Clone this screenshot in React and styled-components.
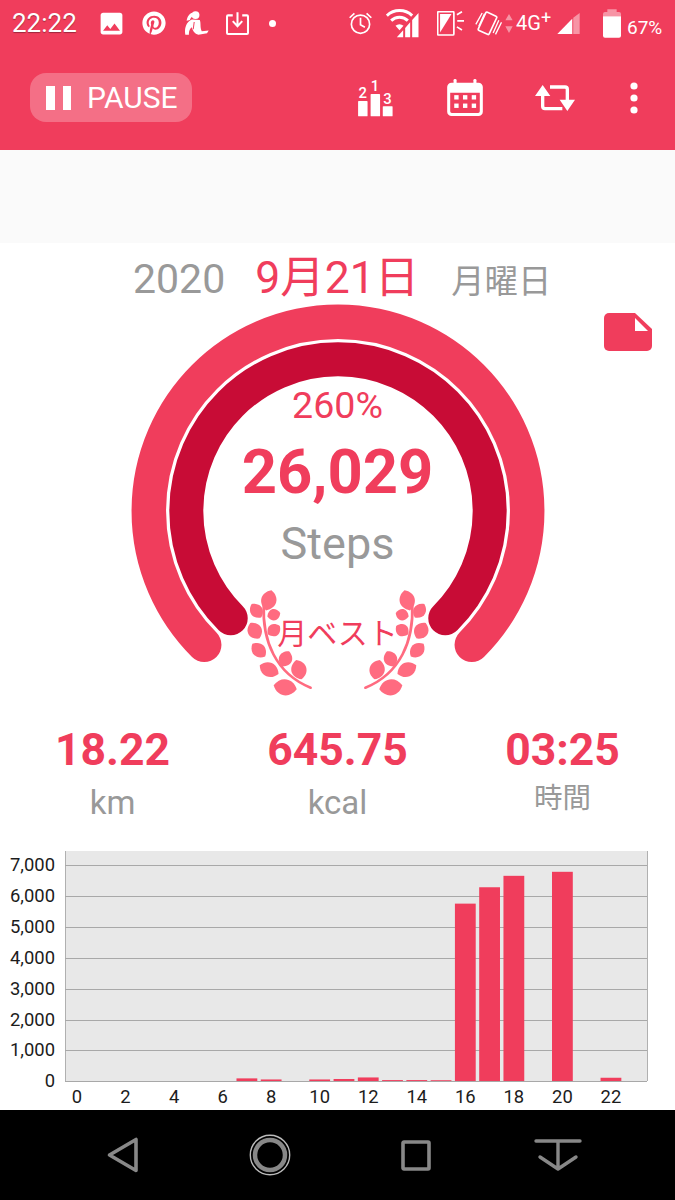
import styled, { createGlobalStyle } from "styled-components";
import { FaPinterest } from "react-icons/fa";
import { MdImage } from "react-icons/md";

const RED = "#f03d5c";
const DARK_RED = "#c80c36";
const GREY = "#999999";

const hourlySteps = {
  7: 85, 8: 50, 10: 50, 11: 65, 12: 115, 13: 30, 14: 30, 15: 25,
  16: 5740, 17: 6270, 18: 6640, 20: 6770, 22: 105,
};
const gridValues = [7000, 6000, 5000, 4000, 3000, 2000, 1000, 0];
const gridY = [865, 896, 927, 958, 989, 1020, 1050, 1081];
const evenHours = [0, 2, 4, 6, 8, 10, 12, 14, 16, 18, 20, 22];

// chart svg starts at page y 845
const CHART_TOP = 845;
const hourX = (hour) => 77 + hour * 24.27;
const stepsY = (steps) => 1081 - (steps / 1000) * 30.9;

function gaugeArc(r) {
  const cx = 210;
  const cy = 207;
  const d = r * Math.SQRT1_2;
  return `M ${cx - d} ${cy + d} A ${r} ${r} 0 1 1 ${cx + d} ${cy + d}`;
}

// cx, cy, half width, half length, tilt
const leaves = [
  [145, 91, 16, 31, 15],
  [108, 122, 13, 25, -35],
  [160, 134, 12, 20, 75],
  [103, 182, 15, 27, -30],
  [160, 180, 13, 22, 55],
  [115, 240, 14, 27, -45],
  [195, 266, 14, 25, 25],
  [146, 298, 15, 31, -65],
  [235, 298, 16, 30, -15],
  [194, 351, 17, 35, -80],
];

const leafPath = (w, l) =>
  `M0 ${-l} C${w * 1.9} ${-l * 0.55} ${w * 1.9} ${l * 0.55} 0 ${l} C${-w * 1.9} ${l * 0.55} ${-w * 1.9} ${-l * 0.55} 0 ${-l} Z`;

function Laurel({ flip }) {
  return (
    <LaurelSvg $flip={flip} viewBox="80 60 200 320">
      <path
        d="M130 105 C125 210 165 310 270 352"
        fill="none"
        stroke="#ff6b80"
        strokeWidth="8"
        strokeLinecap="round"
      />
      {leaves.map(([x, y, w, l, angle]) => (
        <path
          key={`${x}-${y}`}
          d={leafPath(w, l)}
          fill="#ff6b80"
          transform={`translate(${x} ${y}) rotate(${angle})`}
        />
      ))}
    </LaurelSvg>
  );
}

function StatusBar() {
  return (
    <StatusRow>
      <Clock>22:22</Clock>
      <StatusSlot $ml={23} $w={22}>
        <MdImage size={29} />
      </StatusSlot>
      <StatusSlot $ml={20} $w={24}>
        <FaPinterest size={24} />
      </StatusSlot>
      <StatusSlot $ml={19} $w={24}>
        <svg width="24" height="26" viewBox="555 28 73 78" fill="#fff">
          <circle cx="587" cy="43" r="12" />
          <path d="M577 36 C566 40 562 50 560 60 L570 58 C572 52 576 48 580 46 Z" />
          <path d="M576 56 C560 62 552 82 556 103 L567 103 C566 92 570 84 576 80 C578 90 584 100 596 103 L622 98 L627 90 L606 92 C600 80 604 68 600 58 Z" />
          <path d="M583 64 L580 86" fill="none" stroke={RED} strokeWidth="3" />
        </svg>
      </StatusSlot>
      <StatusSlot $ml={17} $w={23}>
        <svg width="23" height="23" viewBox="677 35 68 68" fill="none" stroke="#fff" strokeWidth="6">
          <path d="M697 45 H683 a3 3 0 0 0 -3 3 V97 a3 3 0 0 0 3 3 H739 a3 3 0 0 0 3 -3 V48 a3 3 0 0 0 -3 -3 H725" />
          <path d="M711 36 V76 M697 62 L711 77 L725 62" />
        </svg>
      </StatusSlot>
      <StatusSlot $ml={19} $w={8}>
        <Dot />
      </StatusSlot>

      <StatusSlot $ml={73} $w={23}>
        <svg width="23" height="23" viewBox="40 33 68 68" fill="none" stroke="#fff" strokeWidth="5">
          <circle cx="74" cy="69" r="27" />
          <path d="M74 50 V71 L87 78 M42 50 L56 37 M92 37 L106 50" />
        </svg>
      </StatusSlot>
      <StatusSlot $ml={14} $w={33}>
        <svg width="33" height="30" viewBox="150 25 98 90" fill="#fff">
          <path d="M152 48 A55 55 0 0 1 228 48" fill="none" stroke="#fff" strokeWidth="9" />
          <path d="M165 63 A36 36 0 0 1 215 63" fill="none" stroke="#fff" strokeWidth="9" />
          <path d="M178 78 A18 18 0 0 1 202 78 L190 92 Z" />
          <path d="M182 113 L201 92 V113 Z M207 113 V85 L222 68 V113 Z M228 113 V61 L247 40 V113 Z" />
        </svg>
      </StatusSlot>
      <StatusSlot $ml={18} $w={27}>
        <svg width="27" height="25" viewBox="302 33 80 74" fill="#fff">
          <rect x="304" y="35" width="48" height="69" rx="3" fill="none" stroke="#fff" strokeWidth="5" />
          <path d="M311 42 H345 L311 97 Z" />
          <path d="M361 44 L376 35 M362 62 H382 M361 80 L376 89" fill="none" stroke="#fff" strokeWidth="5" />
        </svg>
      </StatusSlot>
      <StatusSlot $ml={11} $w={27}>
        <svg width="27" height="25" viewBox="415 30 80 75" fill="none" stroke="#fff" strokeWidth="4">
          <rect x="434" y="37" width="36" height="60" rx="4" strokeWidth="5" transform="rotate(25 452 67)" />
          <path d="M436 36 L417 70 M443 38 L426 76 M469 96 L486 58 M476 100 L494 64" />
        </svg>
      </StatusSlot>
      <StatusSlot $ml={3} $w={8}>
        <svg width="8" height="19" viewBox="505 33 22 57" fill="#fff" opacity="0.45">
          <path d="M516 33 L527 52 H505 Z M516 90 L505 70 H527 Z" />
        </svg>
      </StatusSlot>
      <NetworkType>
        4G<sup>+</sup>
      </NetworkType>
      <StatusSlot $ml={5} $w={23}>
        <svg width="23" height="21" viewBox="667 38 66 62" fill="#fff">
          <path d="M667 100 L711 55 V100 Z" />
          <path d="M714 100 V52 L733 38 V100 Z" opacity="0.45" />
        </svg>
      </StatusSlot>
      <StatusSlot $ml={23} $w={18}>
        <svg width="18" height="29" viewBox="802 25 54 85" fill="#fff">
          <path d="M815 25 H843 V33 H850 a6 6 0 0 1 6 6 V46 H802 V39 a6 6 0 0 1 6 -6 H815 Z" opacity="0.45" />
          <path d="M802 46 H856 V104 a6 6 0 0 1 -6 6 H808 a6 6 0 0 1 -6 -6 Z" />
        </svg>
      </StatusSlot>
      <BatteryLevel>67%</BatteryLevel>
    </StatusRow>
  );
}

function Toolbar() {
  return (
    <ToolbarRow>
      <PauseButton>
        <PauseBars>
          <span />
          <span />
        </PauseBars>
        PAUSE
      </PauseButton>
      <ToolbarIcons>
        <ToolIcon>
          <PodiumSvg width="36" height="46" viewBox="68 214 104 136" fill="#fff">
            <text x="84" y="295">2</text>
            <text x="120" y="274">1</text>
            <text x="157" y="311">3</text>
            <rect x="70" y="303" width="28" height="45" rx="2" />
            <rect x="107" y="282" width="28" height="66" rx="2" />
            <rect x="143" y="318" width="29" height="30" rx="2" />
          </PodiumSvg>
        </ToolIcon>
        <ToolIcon>
          <svg width="36" height="37" viewBox="337 237 106 110" fill="#fff">
            <path d="M350 248 H430 a13 13 0 0 1 13 13 V334 a13 13 0 0 1 -13 13 H350 a13 13 0 0 1 -13 -13 V261 a13 13 0 0 1 13 -13 Z M346 278 V333 a5 5 0 0 0 5 5 H429 a5 5 0 0 0 5 -5 V278 Z" fillRule="evenodd" />
            <rect x="356" y="237" width="9" height="18" rx="4" />
            <rect x="415" y="237" width="9" height="18" rx="4" />
            {[358, 384, 410].map((x) =>
              [285, 310].map((y) => <rect key={`${x}-${y}`} x={x} y={y} width="13" height="13" />)
            )}
          </svg>
        </ToolIcon>
        <ToolIcon>
          <svg width="40" height="26" viewBox="600 254 120 78">
            <path d="M623 275 V318 a7 7 0 0 0 7 7 H682" fill="none" stroke="#fff" strokeWidth="10" strokeLinejoin="round" />
            <path d="M645 260 H690 a7 7 0 0 1 7 7 V310" fill="none" stroke="#fff" strokeWidth="10" strokeLinejoin="round" />
            <path d="M623 254 L646 287 H600 Z M697 332 L720 298 H674 Z" fill="#fff" />
          </svg>
        </ToolIcon>
        <MoreIcon>
          <svg width="8" height="32" viewBox="0 0 8 32" fill="#fff">
            <circle cx="4" cy="4" r="3.6" />
            <circle cx="4" cy="16" r="3.6" />
            <circle cx="4" cy="28" r="3.6" />
          </svg>
        </MoreIcon>
      </ToolbarIcons>
    </ToolbarRow>
  );
}

function Gauge() {
  return (
    <GaugeWrap>
      <GaugeSvg width="420" height="400" viewBox="0 0 420 400" fill="none" strokeLinecap="round">
        <path d={gaugeArc(189.2)} stroke={RED} strokeWidth="34.5" />
        <path d={gaugeArc(151.7)} stroke={DARK_RED} strokeWidth="34" />
      </GaugeSvg>
      <LaurelRow>
        <Laurel />
        <Laurel flip />
      </LaurelRow>
      <GaugeText>
        <Percent>260%</Percent>
        <StepCount>26,029</StepCount>
        <StepLabel>Steps</StepLabel>
        <BestLabel>月ベスト</BestLabel>
      </GaugeText>
    </GaugeWrap>
  );
}

function HourlyChart() {
  return (
    <ChartSvg width="675" height="265" viewBox={`0 ${CHART_TOP} 675 265`}>
      <rect x="65" y="851" width="582" height="230" fill="#e8e8e8" />
      <path d="M65.5 851 V1081 M647.5 851 V1081" stroke="#b0b0b0" strokeWidth="1" />
      {gridValues.map((value, i) => (
        <g key={value}>
          <line x1="65" x2="647" y1={gridY[i] + 0.5} y2={gridY[i] + 0.5} stroke="#a8a8a8" strokeWidth="1" />
          <text x="55" y={gridY[i] + 6} textAnchor="end">
            {value.toLocaleString("en-US")}
          </text>
        </g>
      ))}
      {Object.entries(hourlySteps).map(([hour, steps]) => (
        <rect
          key={hour}
          x={hourX(Number(hour)) - 10.4}
          y={stepsY(steps)}
          width="20.8"
          height={1081 - stepsY(steps)}
          fill={RED}
        />
      ))}
      {evenHours.map((hour) => (
        <text key={hour} x={hourX(hour)} y="1103" textAnchor="middle">
          {hour}
        </text>
      ))}
    </ChartSvg>
  );
}

export default function App() {
  return (
    <Screen>
      <GlobalStyle />
      <Header>
        <StatusBar />
        <Toolbar />
      </Header>
      <AdBand />
      <Content>
        <DateRow>
          <Year>2020</Year>
          <DateText>9月21日</DateText>
          <Weekday>月曜日</Weekday>
        </DateRow>
        <NoteIcon viewBox="0 0 48 38">
          <path
            d="M5 0 H31 L48 16 V33 a5 5 0 0 1 -5 5 H5 a5 5 0 0 1 -5 -5 V5 a5 5 0 0 1 5 -5 Z"
            fill={RED}
          />
          <path d="M31 5 L44 18 H31 Z" fill="#fff" />
        </NoteIcon>
        <Gauge />
        <StatsRow>
          <Stat>
            <StatValue>18.22</StatValue>
            <StatLabel>km</StatLabel>
          </Stat>
          <Stat>
            <StatValue>645.75</StatValue>
            <StatLabel>kcal</StatLabel>
          </Stat>
          <Stat>
            <StatValue>03:25</StatValue>
            <StatLabel $cjk>時間</StatLabel>
          </Stat>
        </StatsRow>
        <HourlyChart />
      </Content>
      <NavBar>
        <svg width="32" height="36" viewBox="0 0 32 36" fill="none" stroke="#888" strokeWidth="3.6" strokeLinejoin="round">
          <path d="M2.5 18 L29 2.5 V33.5 Z" />
        </svg>
        <svg width="42" height="42" viewBox="0 0 42 42" fill="none" stroke="#888">
          <circle cx="21" cy="21" r="19.7" strokeWidth="1.4" stroke="#bbb" />
          <circle cx="21" cy="21" r="15" strokeWidth="4.5" />
        </svg>
        <svg width="30" height="31" viewBox="0 0 30 31" fill="none" stroke="#888" strokeWidth="3.6" strokeLinejoin="round">
          <rect x="2" y="2" width="26" height="27" rx="1" />
        </svg>
        <svg width="48" height="34" viewBox="0 0 48 34" fill="none" stroke="#888" strokeWidth="3.4" strokeLinecap="round" strokeLinejoin="round">
          <path d="M2 3 H46 M24 3 V31 M6 19 L24 31 L42 19" />
        </svg>
      </NavBar>
    </Screen>
  );
}

const GlobalStyle = createGlobalStyle`
  html, body {
    margin: 0;
    padding: 0;
    background: #fff;
  }
`;

const Screen = styled.div`
  width: 675px;
  height: 1200px;
  display: flex;
  flex-direction: column;
  overflow: hidden;
  background: #fff;
  font-family: Roboto, "Noto Sans CJK JP", sans-serif;
`;

const Header = styled.header`
  height: 150px;
  display: flex;
  flex-direction: column;
  background: ${RED};
  color: #fff;
`;

const StatusRow = styled.div`
  height: 46px;
  display: flex;
  align-items: center;
  padding-left: 12px;
`;

const Clock = styled.span`
  width: 65px;
  font-size: 26px;
  text-shadow: 0 1px 1px rgba(0, 0, 0, 0.35);
`;

const StatusSlot = styled.span`
  display: flex;
  flex: none;
  align-items: center;
  justify-content: center;
  width: ${(p) => p.$w}px;
  margin-left: ${(p) => p.$ml}px;

  svg {
    flex: none;
  }
`;

const Dot = styled.span`
  width: 7px;
  height: 7px;
  border-radius: 50%;
  background: #fff;
`;

const NetworkType = styled.span`
  width: 36px;
  margin-left: 3px;
  font-size: 20px;
  white-space: nowrap;

  sup {
    font-size: 18px;
    line-height: 0;
    vertical-align: 6px;
  }
`;

const BatteryLevel = styled.span`
  margin: 8px 0 0 6px;
  font-size: 19px;
`;

const ToolbarRow = styled.div`
  flex: 1;
  display: flex;
  align-items: center;
  justify-content: space-between;
  padding: 0 37px 0 30px;
  margin-top: 3px;
`;

const PauseButton = styled.div`
  width: 162px;
  height: 49px;
  box-sizing: border-box;
  display: flex;
  align-items: center;
  gap: 16px;
  padding-left: 16px;
  margin-bottom: 4px;
  border-radius: 16px;
  background: rgba(255, 255, 255, 0.26);
  font-size: 30px;
`;

const PauseBars = styled.span`
  display: flex;
  gap: 8px;

  span {
    width: 8.5px;
    height: 24px;
    background: #fff;
  }
`;

const ToolbarIcons = styled.div`
  display: flex;
  align-items: center;
  margin-bottom: 4px;
`;

const ToolIcon = styled.span`
  display: flex;
  justify-content: center;
  width: 90px;
`;

const MoreIcon = styled.span`
  display: flex;
  justify-content: center;
  width: 8px;
  margin-left: 30px;
`;

const PodiumSvg = styled.svg`
  margin-top: -8px;

  text {
    font-family: Roboto, sans-serif;
    font-size: 44px;
    font-weight: 500;
    text-anchor: middle;
  }
`;

const AdBand = styled.div`
  height: 93px;
  background: #fafafa;
`;

const Content = styled.main`
  position: relative;
  flex: 1;
  display: flex;
  flex-direction: column;
  overflow: hidden;
`;

const DateRow = styled.div`
  height: 59px;
  padding: 2px 0 0 133px;
  display: flex;
  align-items: baseline;
  line-height: 66px;
`;

const Year = styled.span`
  font-size: 41px;
  color: ${GREY};
`;

const DateText = styled.span`
  margin-left: 30px;
  font-size: 44.5px;
  color: ${RED};
`;

const Weekday = styled.span`
  margin-left: 32px;
  font-size: 33.4px;
  color: ${GREY};
`;

const NoteIcon = styled.svg`
  position: absolute;
  top: 70px;
  right: 23px;
  width: 48px;
  height: 38px;
`;

const GaugeWrap = styled.div`
  position: relative;
  height: 400px;
  display: flex;
  justify-content: center;
`;

const GaugeSvg = styled.svg`
  display: block;
`;

const LaurelRow = styled.div`
  position: absolute;
  top: 286px;
  left: 0;
  right: 0;
  display: flex;
  justify-content: center;
  gap: 48px;
`;

const LaurelSvg = styled.svg`
  width: 67px;
  height: 107px;
  transform: ${(p) => (p.$flip ? "scaleX(-1)" : "none")};
`;

const GaugeText = styled.div`
  position: absolute;
  inset: 81px 0 0;
  display: flex;
  flex-direction: column;
  align-items: center;
`;

const Percent = styled.div`
  font-size: 37.6px;
  line-height: 40px;
  color: ${RED};
`;

const StepCount = styled.div`
  margin-top: 13px;
  font-size: 61.5px;
  font-weight: 700;
  line-height: 68px;
  color: ${RED};
`;

const StepLabel = styled.div`
  margin-top: 13px;
  font-size: 45px;
  line-height: 50px;
  color: ${GREY};
`;

const BestLabel = styled.div`
  margin-top: 45px;
  font-size: 30px;
  line-height: 40px;
  color: ${RED};
`;

const StatsRow = styled.div`
  display: grid;
  grid-template-columns: repeat(3, 1fr);
  padding-top: 16px;
`;

const Stat = styled.div`
  display: flex;
  flex-direction: column;
  align-items: center;
`;

const StatValue = styled.div`
  font-size: 44.5px;
  font-weight: 700;
  line-height: 60px;
  color: ${RED};
`;

const StatLabel = styled.div`
  height: 44px;
  font-size: ${(p) => (p.$cjk ? "28.5px" : "33px")};
  line-height: ${(p) => (p.$cjk ? "38px" : "46px")};
  color: ${GREY};
`;

const ChartSvg = styled.svg`
  display: block;
  margin-top: 21px;
  flex: none;

  text {
    font-family: Roboto, sans-serif;
    font-size: 18.4px;
    fill: #1c1c1c;
  }
`;

const NavBar = styled.nav`
  height: 90px;
  flex: none;
  display: flex;
  align-items: center;
  gap: 110px;
  padding-left: 107px;
  background: #000;

  svg:last-child {
    margin-left: -7px;
  }
`;
